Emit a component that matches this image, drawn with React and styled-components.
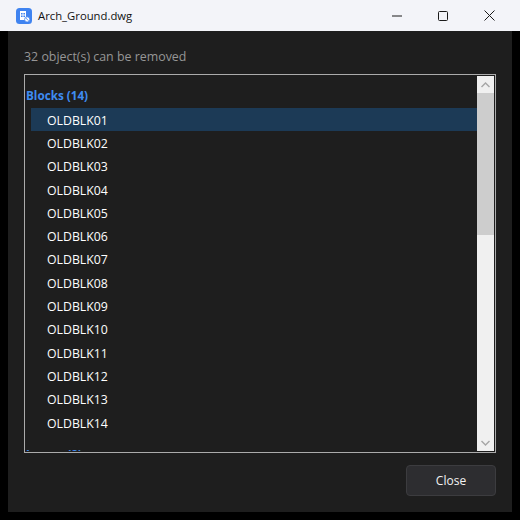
import React from 'react'
import styled, { createGlobalStyle } from 'styled-components'

const blocks = ['01', '02', '03', '04', '05', '06', '07', '08', '09', '10', '11', '12', '13', '14']

const GlobalStyle = createGlobalStyle`
  html, body {
    margin: 0;
    padding: 0;
    background: #000;
  }
  body {
    font-family: "Open Sans", "Noto Sans", "Liberation Sans", sans-serif;
  }
`

const Frame = styled.div`
  width: 520px;
  height: 520px;
  display: flex;
  flex-direction: column;
  background: #000;
  overflow: hidden;
`

const TitleBar = styled.div`
  height: 31px;
  flex: none;
  display: flex;
  align-items: center;
  background: #f3f4f9;
  padding: 0 8px 0 16px;
`

const AppIcon = styled.svg`
  width: 16px;
  height: 16px;
  flex: none;
  margin-right: 6px;
`

const Title = styled.div`
  font-size: 11.3px;
  color: #111;
  flex: 1;
`

const WinButton = styled.div`
  width: 46px;
  height: 31px;
  display: flex;
  align-items: center;
  justify-content: center;
`

const Dialog = styled.div`
  flex: 1;
  margin: 0 8px 8px;
  background: #1e1e1e;
  padding: 15px 16px 16px;
  display: flex;
  flex-direction: column;
`

const Summary = styled.div`
  font-size: 12.4px;
  line-height: 21px;
  color: #969696;
  margin-bottom: 7px;
`

const ListBox = styled.div`
  height: 379px;
  box-sizing: border-box;
  border: 1px solid #ababab;
  display: flex;
  padding: 1px;
  overflow: hidden;
`

const ListContent = styled.div`
  flex: 1;
  overflow: hidden;
`

const GroupTitle = styled.div`
  font-size: 11.7px;
  font-weight: 700;
  color: #3f8cf2;
  height: ${(props) => (props.first ? '23.7px' : '23px')};
  line-height: 23px;
  margin-top: ${(props) => (props.first ? '8px' : '9.3px')};
`

const Row = styled.div`
  height: 23.3px;
  line-height: 25px;
  font-size: 12.3px;
  color: #ffffff;
  margin-left: 5px;
  padding-left: 16px;
  background: ${(props) => (props.selected ? '#1c3a56' : 'transparent')};
`

const ScrollBar = styled.div`
  width: 17px;
  flex: none;
  display: flex;
  flex-direction: column;
  background: #f0f0f0;
`

const ScrollArrow = styled.div`
  height: 17px;
  flex: none;
  display: flex;
  align-items: center;
  justify-content: center;
`

const ScrollTrack = styled.div`
  flex: 1;
`

const ScrollThumb = styled.div`
  height: 142px;
  background: #cdcdcd;
`

const Footer = styled.div`
  display: flex;
  justify-content: flex-end;
  margin-top: 12px;
`

const CloseButton = styled.button`
  width: 90px;
  height: 31px;
  box-sizing: border-box;
  background: #2d2d30;
  border: 1px solid #3c3c3f;
  border-radius: 4px;
  color: #f2f2f2;
  font-family: inherit;
  font-size: 12px;
  padding: 0;
`

const Chevron = ({ d }) => (
  <svg width="9" height="6" viewBox="0 0 9 6">
    <path d={d} fill="none" stroke="#a6a6a6" strokeWidth="1.4" />
  </svg>
)

export default function App() {
  return (
    <Frame>
      <GlobalStyle />
      <TitleBar>
        <AppIcon viewBox="0 0 16 16">
          <rect width="16" height="16" rx="3.5" fill="#3f83f0" />
          <path d="M4 3h6v9H4z" fill="#fff" />
          <path d="M5 5h1.6v1.6H5zM7.4 5H9v1.6H7.4zM5 7.4h1.6V9H5zM7.4 7.4H9V9H7.4z" fill="#3f83f0" />
          <circle cx="11.2" cy="11.4" r="2.6" fill="#fff" stroke="#3f83f0" strokeWidth="0.8" />
          <path d="M9.8 10l2.8 2.8" stroke="#3f83f0" strokeWidth="0.8" />
        </AppIcon>
        <Title>Arch_Ground.dwg</Title>
        <WinButton>
          <svg width="10" height="10" viewBox="0 0 10 10">
            <path d="M0 5h10" stroke="#1a1a1a" strokeWidth="1" />
          </svg>
        </WinButton>
        <WinButton>
          <svg width="10" height="10" viewBox="0 0 10 10">
            <rect x="0.5" y="0.5" width="9" height="9" rx="1" fill="none" stroke="#1a1a1a" />
          </svg>
        </WinButton>
        <WinButton>
          <svg width="11" height="11" viewBox="0 0 11 11">
            <path d="M0.5 0.5l10 10M10.5 0.5l-10 10" stroke="#1a1a1a" strokeWidth="1" />
          </svg>
        </WinButton>
      </TitleBar>
      <Dialog>
        <Summary>32 object(s) can be removed</Summary>
        <ListBox>
          <ListContent>
            <GroupTitle first>Blocks (14)</GroupTitle>
            {blocks.map((n, i) => (
              <Row key={n} selected={i === 0}>OLDBLK{n}</Row>
            ))}
            <GroupTitle>Layers (8)</GroupTitle>
          </ListContent>
          <ScrollBar>
            <ScrollArrow>
              <Chevron d="M0.5 5L4.5 1L8.5 5" />
            </ScrollArrow>
            <ScrollThumb />
            <ScrollTrack />
            <ScrollArrow>
              <Chevron d="M0.5 1L4.5 5L8.5 1" />
            </ScrollArrow>
          </ScrollBar>
        </ListBox>
        <Footer>
          <CloseButton>Close</CloseButton>
        </Footer>
      </Dialog>
    </Frame>
  )
}
